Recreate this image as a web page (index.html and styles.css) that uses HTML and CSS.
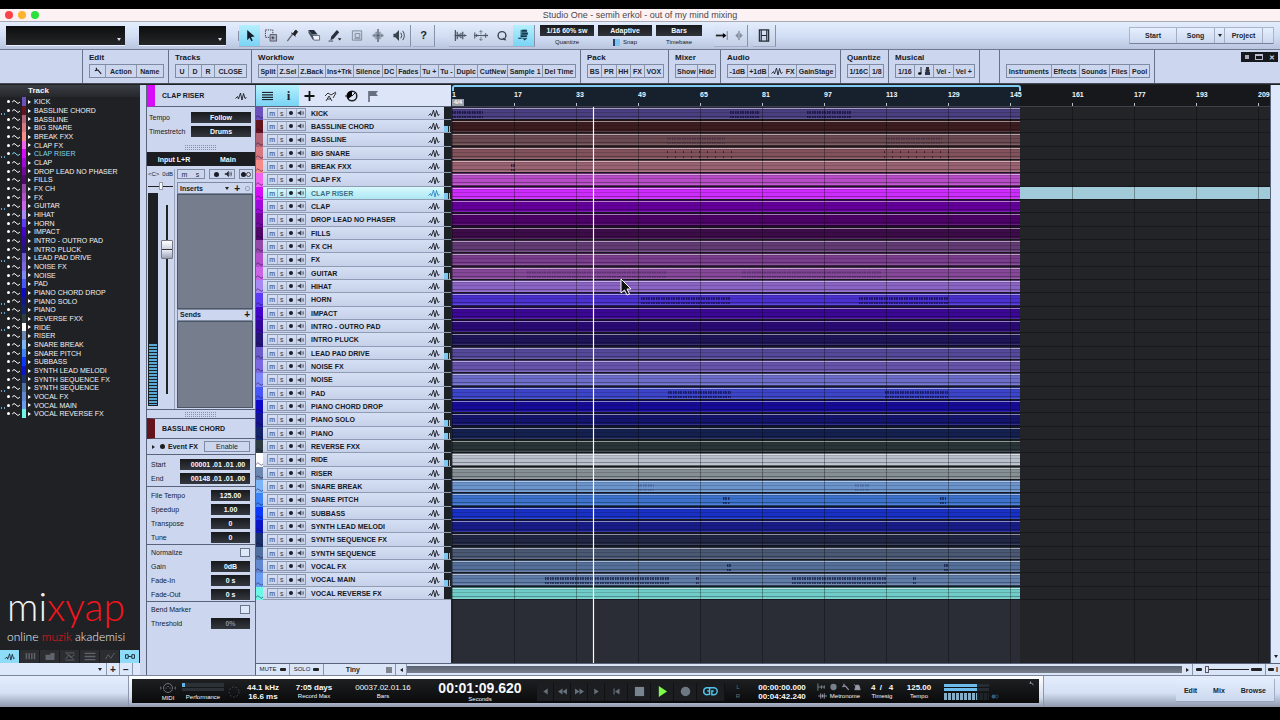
FILE: index.html
```
<!DOCTYPE html>
<html lang="en">
<head>
<meta charset="utf-8">
<title>Studio One - semih erkol - out of my mind mixing</title>
<link rel="stylesheet" href="styles.css">
</head>
<body>
<svg class="defs" aria-hidden="true">
  <symbol id="wave" viewBox="0 0 12 10"><path d="M.5 7.500L2.500 5.500 3.500 8 5.500 2 7 9 8.500 2.500 10 7.500 11.500 6.500" fill="none" stroke="currentColor" stroke-width=".9"/></symbol>
  <symbol id="speaker" viewBox="0 0 10 8"><path d="M1 3h2l3-3v8L3 5H1z" fill="currentColor"/><path d="M7 2q1.500 2 0 4M8.500 1q2 3 0 6" fill="none" stroke="currentColor" stroke-width=".8"/></symbol>
  <symbol id="sine" viewBox="0 0 8 6"><path d="M0 3.500Q2 0 4 3t4 0" fill="none" stroke="currentColor" stroke-width="1"/></symbol>
  <symbol id="wrench" viewBox="0 0 10 10"><path d="M3 1v3h2L9 8.500M4 4L1 4.500" fill="none" stroke="currentColor" stroke-width="1.500"/></symbol>
  <symbol id="bars3" viewBox="0 0 12 10"><path d="M0 1h12M0 3.700h12M0 6.400h12M0 9h12" stroke="currentColor" stroke-width="1.300"/></symbol>
</svg>
<div class="app">
  <header class="titlebar">
    <span class="lights"><i class="red"></i><i class="amber"></i><i class="green"></i></span>
    <h1>Studio One - semih erkol - out of my mind mixing</h1>
  </header>

  <div class="toolbar">
    <button class="display wide" aria-label="Parameter"><i class="down"></i></button>
    <button class="display" aria-label="Value"><i class="down"></i></button>
    <div class="tools edit-tools">
      <button class="on" aria-label="Arrow"><svg viewBox="0 0 14 14"><path d="M4 1l8 7-4 .500 2 4-1.500.800-2-4L4 12z" fill="#111c28"/></svg></button>
      <button aria-label="Range"><svg viewBox="0 0 14 14"><path d="M1 1h8v8H1z" fill="none" stroke="#334" stroke-dasharray="1.500 1"/><path d="M6 6h7v7H6z" fill="#aab3c6" stroke="#556"/><path d="M9 8v3M7.500 9.500h3" stroke="#334"/></svg></button>
      <button aria-label="Split"><svg viewBox="0 0 14 14"><path d="M2 13l6-8" stroke="#667" stroke-width="1.500"/><path d="M6 4l5 4M8 5l3-4 2 2-3 4z" stroke="#222" fill="#222"/></svg></button>
      <button aria-label="Eraser"><svg viewBox="0 0 14 14"><path d="M1 1h6l4 5H5z" fill="#222c36"/><path d="M5 7h8v5H7z" fill="#eef2fa" stroke="#667"/><path d="M1 1v3l5 8V7z" fill="#4a525e"/></svg></button>
      <button aria-label="Paint"><svg viewBox="0 0 14 14"><path d="M2 12l1-4 6-7 2.500 2.500-6 7z" fill="#273039"/><path d="M0 13h5" stroke="#445"/><path d="M10 10h4l-2 2.500z" fill="#222"/></svg></button>
      <button aria-label="Mute"><svg viewBox="0 0 14 14"><path d="M2 2h10v10H2z" fill="#cfd8ea" stroke="#7c8799"/><path d="M5 5h5v4H5zM4 10.500h7" fill="none" stroke="#7c8799"/></svg></button>
      <button aria-label="Bend"><svg viewBox="0 0 14 14"><path d="M1 7h12M3 5v4M5 3v8M9 3v8M11 5v4" stroke="#7c8799" stroke-width="1.500"/><path d="M7 0v14" stroke="#222"/></svg></button>
      <button aria-label="Listen"><svg viewBox="0 0 14 14"><path d="M1 5h2l4-4v12L3 9H1z" fill="#39434f"/><path d="M9 4q2 3 0 6M11 2q3.500 5 0 10" fill="none" stroke="#39434f"/></svg></button>
    </div>
    <div class="tools help"><button>?</button></div>
    <div class="tools nav-tools">
      <button aria-label="Snap events"><svg viewBox="0 0 14 14"><path d="M2 1v12M4 3v8M6 5v4M8 4v6M10 3v8M12 6v2M1 7h13" stroke="#48525f" stroke-width="1.300"/></svg></button>
      <button aria-label="Stretch"><svg viewBox="0 0 18 14"><path d="M1 3v8M3 5v4M5 6v2M13 6v2M15 4v6M17 6v2M0 7h18" stroke="#48525f" stroke-width="1.200"/><path d="M9 0v14M7 2h4M7 12h4" stroke="#48525f" stroke-dasharray="2 1"/></svg></button>
      <button aria-label="Quantize panel"><svg viewBox="0 0 14 14"><circle cx="7" cy="7" r="4.200" fill="none" stroke="#39434f" stroke-width="1.500"/><path d="M8 10l3 2" stroke="#39434f" stroke-width="1.500"/></svg></button>
      <button class="on" aria-label="Autoscroll"><svg viewBox="0 0 14 14"><path d="M6 1h5v2H6zM6 4h6v2H6zM5 7h6v1.500H5zM2 10h5l1.500 2 3-2" fill="#123a52" stroke="#123a52" stroke-width=".6"/><path d="M5 1v8M2 10h3" stroke="#123a52"/></svg></button>
    </div>
    <div class="fields">
      <div><button class="val">1/16 60% sw</button><small>Quantize</small></div>
      <div><button class="val">Adaptive</button><small><b class="snap"></b>Snap</small></div>
      <div><button class="val narrow">Bars</button><small>Timebase</small></div>
    </div>
    <div class="tools pair">
      <button aria-label="Follow"><svg viewBox="0 0 16 14"><path d="M1 7h10" stroke="#222" stroke-width="2"/><path d="M9 4l4 3-4 3z"/><path d="M14 2v10" stroke="#778"/></svg></button>
      <button aria-label="Center"><svg viewBox="0 0 10 14"><path d="M5 2v10" stroke="#667"/><path d="M4 4v6L1 7zM6 4v6l3-3z" fill="#8390a4"/></svg></button>
    </div>
    <div class="tools video"><button aria-label="Video"><svg viewBox="0 0 14 14"><path d="M2 1h10v12H2zM4 7h6M4 1v12M10 1v12" fill="none" stroke="#222c36" stroke-width="1.300"/></svg></button></div>
    <nav class="pages"><button>Start</button><button>Song</button><button aria-label="Songs"><i class="down dark"></i></button><button>Project</button><button aria-label="More"></button></nav>
  </div>

  <div class="macros">
    <section class="g0"></section>
    <section class="g-edit"><h2>Edit</h2><div><button aria-label="Setup"><svg class="i8"><use href="#wrench"/></svg></button><button>Action</button><button>Name</button></div></section>
    <section class="g-tracks"><h2>Tracks</h2><div><button>U</button><button>D</button><button>R</button><button>CLOSE</button></div></section>
    <section class="g-flow"><h2>Workflow</h2><div><button>Split</button><button>Z.Sel</button><button>Z.Back</button><button>Ins+Trk</button><button>Silence</button><button>DC</button><button>Fades</button><button>Tu +</button><button>Tu -</button><button>Duplc</button><button>CutNew</button><button>Sample 1</button><button>Del Time</button></div></section>
    <section class="g-pack"><h2>Pack</h2><div><button>BS</button><button>PR</button><button>HH</button><button>FX</button><button>VOX</button></div></section>
    <section class="g-mixer"><h2>Mixer</h2><div><button>Show</button><button>Hide</button></div></section>
    <section class="g-audio"><h2>Audio</h2><div><button>-1dB</button><button>+1dB</button><button class="plain" aria-label="Audio event"><svg class="i10"><use href="#wave"/></svg></button><button>FX</button><button>GainStage</button></div></section>
    <section class="g-quant"><h2>Quantize</h2><div><button>1/16C</button><button>1/8</button></div></section>
    <section class="g-music"><h2>Musical</h2><div><button>1/16</button><button aria-label="Note"><svg class="note" viewBox="0 0 14 10"><path d="M4 1v6" stroke="#222"/><ellipse cx="2.800" cy="7.500" rx="1.800" ry="1.300"/><path d="M8 9h5V6h-1l1-1-1-2V1H9v2L8 5l1 1H8z" fill="#334"/></svg></button><button>Vel -</button><button>Vel +</button></div></section>
    <section class="g-gap"></section>
    <section class="g-browse"><div><button>Instruments</button><button>Effects</button><button>Sounds</button><button>Files</button><button>Pool</button></div></section>
    <section class="g-rest"><span class="winbtns"><button aria-label="Pin"><i class="pin"></i></button><button aria-label="Maximize"><i class="max"></i></button><button>✕</button></span></section>
  </div>

  <main class="main">
    <aside class="side">
      <h3>Track</h3>
      <ul id="side-list" class="side-list"></ul>
      <div class="logo"><div class="mark">mi<em>xyap</em></div><p>online <em>muzik</em> akademisi</p></div>
      <div class="tabs">
        <button class="on" aria-label="Audio"><svg class="i10"><use href="#wave"/></svg></button>
        <button aria-label="Keys"><svg viewBox="0 0 12 10"><path d="M2 1v7M5 1v7M8 1v7M11 1v7" stroke="currentColor" stroke-width="1.600"/></svg></button>
        <button aria-label="Folder"><svg viewBox="0 0 12 10"><path d="M1 3h5l1-2h4v8H1z" fill="currentColor"/></svg></button>
        <button aria-label="Bus"><svg viewBox="0 0 12 10"><path d="M1 1h10M1 9h10M1 8l4-5 2 3 4-3M2 2l8 6" fill="none" stroke="currentColor"/></svg></button>
        <button aria-label="List"><svg viewBox="0 0 12 10"><path d="M0 1.500h12M0 5h12M0 8.500h12" stroke="currentColor" stroke-width="1.600"/></svg></button>
        <button aria-label="Automation"><svg viewBox="0 0 12 10"><path d="M1 8l3-5 3 4 4-6" fill="none" stroke="currentColor"/></svg></button>
        <button class="on" aria-label="Link"><svg viewBox="0 0 12 10"><path d="M1 3h3v4H1zM8 3h3v4H8zM4 5h4" fill="none" stroke="currentColor"/></svg></button>
      </div>
      <div class="side-foot"><button aria-label="Filter"><i class="down dark"></i></button><button>+</button><button>−</button><span></span></div>
    </aside>

    <aside class="inspector">
      <div class="ihead clap"><b>CLAP RISER</b><svg class="i10"><use href="#wave"/></svg></div>
      <div class="form tempo">
        <label for="tempo">Tempo</label><input id="tempo" class="w-l" value="Follow" readonly>
        <label for="ts">Timestretch</label><input id="ts" class="w-l" value="Drums" readonly>
      </div>
      <div class="grip"></div>
      <div class="io"><button>Input L+R</button><button>Main</button></div>
      <div class="channel">
        <div class="strip">
          <div class="pan-label"><span>&lt;C&gt;</span><span>0dB</span></div>
          <div class="pan"><i></i></div>
          <div class="fader"><div class="meter"><i></i></div><div class="track"><i></i></div></div>
        </div>
        <div class="racks">
          <div class="chbtns"><span><button>m</button><button>s</button></span><span><button aria-label="Record"><i class="dot"></i></button><button aria-label="Monitor"><svg class="i8"><use href="#speaker"/></svg></button></span><span><button aria-label="Stereo"><i class="dot"></i><i class="ring"></i></button></span></div>
          <div class="rhead"><b>Inserts</b><span><i class="down dark"></i><b class="plus">+</b><i class="pow"></i></span></div>
          <div class="rbody a"></div>
          <div class="rhead"><b>Sends</b><b class="plus">+</b></div>
          <div class="rbody b"></div>
        </div>
      </div>
      <div class="grip g2"></div>
      <div class="ihead chord"><b>BASSLINE CHORD</b></div>
      <div class="efx"><i class="right"></i><i class="dot"></i><b>Event FX</b><button>Enable</button></div>
      <div class="form pos">
        <label for="st">Start</label><input id="st" class="w-xl" value="00001 .01 .01 .00" readonly>
        <label for="en">End</label><input id="en" class="w-xl" value="00148 .01 .01 .00" readonly>
      </div>
      <div class="form">
        <label for="ft">File Tempo</label><input id="ft" value="125.00" readonly>
        <label for="sp">Speedup</label><input id="sp" value="1.00" readonly>
        <label for="tr">Transpose</label><input id="tr" value="0" readonly>
        <label for="tu">Tune</label><input id="tu" value="0" readonly>
      </div>
      <div class="form fades">
        <label for="no">Normalize</label><input id="no" type="checkbox">
        <label for="ga">Gain</label><input id="ga" value="0dB" readonly>
        <label for="fi">Fade-In</label><input id="fi" value="0 s" readonly>
        <label for="fo">Fade-Out</label><input id="fo" value="0 s" readonly>
      </div>
      <div class="form bend">
        <label for="be">Bend Marker</label><input id="be" type="checkbox">
        <label for="th">Threshold</label><input id="th" class="dim" value="0%" readonly>
      </div>
    </aside>

    <section class="arrange">
      <div class="heads">
        <div class="headbar">
          <button class="on" aria-label="Track list"><svg viewBox="0 0 12 10"><use href="#bars3"/></svg></button>
          <button class="on info">i</button>
          <button aria-label="Add track"><svg viewBox="0 0 10 10"><path d="M5 0v10M0 5h10" stroke="#111" stroke-width="1.800"/></svg></button>
          <button aria-label="Automation"><svg class="w14" viewBox="0 0 14 12"><path d="M1 6l3-3 3 2 5-3M2 11l3-5 3 5M3 9h4M9 8l3-5" fill="none" stroke="#333"/></svg></button>
          <button aria-label="Tempo track"><svg class="w14" viewBox="0 0 14 12"><circle cx="7" cy="6" r="4.800" fill="none" stroke="#222" stroke-width="1.500"/><path d="M7 1a5 5 0 0 0-4 8l4-3z"/><path d="M7 6l3-3M0 6h2" stroke="#222"/></svg></button>
          <button aria-label="Marker track"><svg class="w14" viewBox="0 0 14 12"><path d="M3 1v11" stroke="#556" stroke-width="1.400"/><path d="M3 1h9l-2 2.500L12 6H3z" fill="#667080"/></svg></button>
        </div>
        <div id="heads" class="rows"></div>
      </div>
      <div class="timeline">
        <div id="ruler" class="ruler"><span class="loop"></span><span class="sig">4/4</span></div>
        <div class="lanes">
          <div id="lanes" class="rows"></div>
          <div class="gridlines"></div>
          <div class="playhead"></div>
          <svg class="cursor" viewBox="0 0 12 18"><path d="M1 1v14l3.500-3 2.500 5 2.500-1-2.500-5H11z" fill="#111" stroke="#fff"/></svg>
        </div>
      </div>
      <div class="vscroll"><i class="down dark"></i></div>
      <div class="bottombar">
        <button class="ms">MUTE <i></i></button><button class="ms">SOLO <i></i></button>
        <button class="tiny"><b>Tiny</b><svg viewBox="0 0 6 6"><path d="M0 1h6M0 3h6M0 5h6" stroke="#222"/></svg></button>
        <button class="arr" aria-label="Scroll left"><i class="left"></i></button>
        <div class="hbar"></div>
        <button class="arr" aria-label="Scroll right"><i class="right"></i></button>
        <div class="zoom"><i class="pill"></i><input type="range" min="0" max="100" value="0" aria-label="Zoom"><i class="pill big"></i></div>
        <div class="corner"><i class="pill"></i><b>I</b></div>
      </div>
    </section>
  </main>

  <footer class="foot">
    <div class="deck"><div class="transport">
      <div class="c-midi"><svg class="midi" viewBox="0 0 18 12"><circle cx="9" cy="6" r="4.500" fill="none" stroke="#68707a"/><path d="M7 6h.100M9 4.500h.100M11 6h.100" stroke="#889" stroke-width="1.200" stroke-linecap="round"/><path d="M1 4l2 2-2 2zM17 4l-2 2 2 2z" fill="#556"/></svg><small>MIDI</small></div>
      <div class="c-perf"><span class="perf"><i></i></span><span class="perf two"></span><small>Performance</small></div>
      <div class="c-ring"><svg viewBox="0 0 14 14"><circle cx="7" cy="7" r="5" fill="none" stroke="#4c525a" stroke-dasharray="1.500 2"/></svg></div>
      <div class="c-rate"><b>44.1 kHz</b><b>16.6 ms</b></div>
      <div class="c-rec"><b>7:05 days</b><small>Record Max</small></div>
      <div class="c-bars"><span>00037.02.01.16</span><small>Bars</small></div>
      <div class="c-sec"><strong>00:01:09.620</strong><small>Seconds</small></div>
      <div class="c-btn">
        <button aria-label="Previous"><svg viewBox="0 0 12 12"><path d="M9 2v8L3 6z"/></svg></button>
        <button aria-label="Rewind"><svg viewBox="0 0 12 12"><path d="M6 2v8L0 6zM12 2v8L6 6z"/></svg></button>
        <button aria-label="Forward"><svg viewBox="0 0 12 12"><path d="M0 2v8l6-4zM6 2v8l6-4z"/></svg></button>
        <button aria-label="Next"><svg viewBox="0 0 12 12"><path d="M3 2v8l6-4z"/></svg></button>
        <button class="rtz" aria-label="Return to zero"><svg viewBox="0 0 12 12"><path d="M10 2v8L4 6zM2 2h1.500v8H2z"/></svg></button>
        <button class="big" aria-label="Stop"><svg viewBox="0 0 12 12"><path d="M1 1h10v10H1z" fill="#76858f"/></svg></button>
        <button class="big" aria-label="Play"><svg viewBox="0 0 12 12"><path d="M2 0v12l9-6z" fill="#7dfb4a"/></svg></button>
        <button class="big" aria-label="Record"><svg viewBox="0 0 12 12"><circle cx="6" cy="6" r="5.200" fill="#6c7982"/></svg></button>
        <button class="big loopb" aria-label="Loop"><svg viewBox="0 0 18 12"><path d="M7.500 5.500H5.500M8 2H5.500a3.800 3.800 0 0 0-1 7.500L8 9V2h4.500a3.800 3.800 0 0 1 0 7.600H10.500V5.500h2" fill="none" stroke="#4fc3e8" stroke-width="1.600"/></svg></button>
      </div>
      <div class="c-lr"><span>L</span><span>R</span></div>
      <div class="c-loop"><b>00:00:00.000</b><b>00:04:42.240</b></div>
      <div class="c-met">
        <span><svg viewBox="0 0 10 8"><path d="M1 0v8M1 4h8M5 2v4M8 2v4" stroke="#788" /></svg><svg viewBox="0 0 10 8"><circle cx="5" cy="4" r="3.500" fill="#777f88"/></svg><svg viewBox="0 0 10 10" color="#99a"><use href="#wrench"/></svg><svg viewBox="0 0 10 8"><path d="M2 7l1.500-5h3L8 7zM1 1l6 5" fill="#99a" stroke="#99a"/></svg></span>
        <span><svg viewBox="0 0 10 8"><path d="M0 4h10M3 1v6M5 2v4M7 1v6" stroke="#99a"/></svg><small>Metronome</small></span>
      </div>
      <div class="c-sig"><b>4&nbsp; /&nbsp; &nbsp;4</b><small>Timesig</small></div>
      <div class="c-tmp"><b>125.00</b><small>Tempo</small></div>
      <div class="c-out"><i></i><span><i class="seg"></i><svg viewBox="0 0 8 5"><circle cx="2.500" cy="2.500" r="2" fill="#2f5f80"/><circle cx="5.500" cy="2.500" r="1.600" fill="none" stroke="#2f5f80" stroke-width=".8"/></svg></span></div>
      <svg class="cw" viewBox="0 0 10 10"><use href="#wrench"/></svg>
    </div></div>
    <nav class="views"><button>Edit</button><button>Mix</button><button>Browse</button></nav>
  </footer>
</div>
<script src="app.js"></script>
</body>
</html>
```

FILE: styles.css
```
* { box-sizing: border-box; }
body { margin: 0; background: #000; color: #16191f; font: 7px/9px "Liberation Sans", Arial, sans-serif; }
button { font: bold 7px/9px "Liberation Sans", Arial, sans-serif; color: #20242c; background: none; border: 0; padding: 0; margin: 0; display: flex; align-items: center; justify-content: center; white-space: nowrap; }
input { font: bold 7px/9px "Liberation Sans", Arial, sans-serif; margin: 0; }
h1, h2, h3, p, ul { margin: 0; padding: 0; list-style: none; }
i, em { font-style: normal; }
svg { display: block; }
small { font-size: 6px; line-height: 8px; }
.defs { position: absolute; width: 0; height: 0; }
.i8 { width: 8px; height: 8px; }
.i10 { width: 12px; height: 10px; }
.app { min-height: 100vh; padding: 9px 0 13px; display: flex; flex-direction: column; overflow: hidden; }

.down, .left, .right { display: block; width: 0; height: 0; border: 3px solid transparent; flex: none; }
.down { border-top: 3px solid #dde; border-bottom: 0; border-left-width: 2px; border-right-width: 2px; }
.down.dark { border-top-color: #222; }
.left { border-right-color: #222; border-left: 0; border-top-width: 2px; border-bottom-width: 2px; }
.right { border-left-color: #222; border-right: 0; border-top-width: 2px; border-bottom-width: 2px; }
.dot { width: 5px; height: 5px; border-radius: 50%; background: #1a1d24; flex: none; }
.ring { width: 5px; height: 5px; border-radius: 50%; border: 1px solid #444; }

.titlebar { height: 13px; background: #fdf2f3; display: flex; align-items: center; justify-content: center; position: relative; border-bottom: 1px solid #a9a9b4; }
.titlebar h1 { font-size: 9px; font-weight: normal; color: #4c4649; line-height: 12px; }
.lights { position: absolute; left: 5px; display: flex; gap: 5px; }
.lights i { width: 8px; height: 8px; border-radius: 50%; }
.red { background: #fb4248; }
.amber { background: #fdb32b; }
.green { background: #2ae03b; }

.toolbar { height: 28px; display: flex; align-items: center; background: linear-gradient(#e3edfd, #d3dff5 50%, #b9c5de); border-bottom: 1px solid #6f7a90; padding: 0 6px; }
.display { width: 87px; height: 20px; background: linear-gradient(#0c0d0e, #242628); justify-content: flex-end; align-items: flex-end; padding: 4px; border-bottom: 1px solid #eef; }
.display.wide { width: 119px; margin-right: 14px; }
.tools { display: flex; height: 22px; border-right: 1px solid #8792a8; border-bottom: 1px solid #a3aec4; background: linear-gradient(#dfe9fa, #c3cfe6); }
.tools button { flex: 1; }
.tools svg { width: 14px; height: 13px; }
.tools .on, .headbar .on { background: linear-gradient(#b5f0fd, #7ad3f5); }
.edit-tools { width: 172px; margin-left: 13px; box-shadow: -7px 0 0 -6px #8792a8; }
.help { width: 22px; margin-left: 2px; }
.help button { font-size: 11px; }
.nav-tools { width: 86px; margin-left: 14px; }
.fields { display: flex; gap: 4px; margin-left: 5px; text-align: center; }
.fields small { display: flex; justify-content: center; align-items: center; gap: 3px; margin-top: 2px; }
.val { width: 54px; height: 11px; color: #f4f6fa; background: linear-gradient(#17191c, #30343a); }
.val.narrow { width: 46px; }
.snap { width: 7px; height: 7px; background: #7cc4f4; border-left: 2px solid #246; }
.pair { width: 34px; margin-left: 12px; }
.video { width: 23px; margin-left: 5px; }
.pages { margin-left: auto; display: flex; height: 17px; background: linear-gradient(#e6effe, #cbd7ee); border: 1px solid #aab5ca; border-bottom-color: #77829a; }
.pages button { width: 38px; border-right: 1px solid #a3aec4; }
.pages button:nth-child(1) { width: 47px; }
.pages button:nth-child(3), .pages button:nth-child(5) { width: 10px; }
.pages button:last-child { border: 0; }

.macros { height: 34px; display: flex; background: #ccd7ef; border-bottom: 1px solid #444c5c; }
.macros section { border-right: 1px solid #66718a; padding: 3px 4px 0 6px; flex: none; }
.macros h2 { font-size: 8px; line-height: 10px; height: 11px; }
.macros section > div { display: flex; height: 14px; border: 1px solid #7f8ba3; }
.macros div button { flex: 1 1 auto; border-right: 1px solid #8b96ad; }
.macros div button:last-child, .macros div .plain { border: 0; }
.macros .note { width: 14px; height: 10px; }
.macros .g0 { width: 83px; }
.macros .g-edit { width: 86px; }
.macros .g-tracks { width: 83px; }
.macros .g-flow { width: 329px; }
.macros .g-pack { width: 88px; }
.macros .g-mixer { width: 52px; }
.macros .g-audio { width: 120px; }
.macros .g-quant { width: 48px; }
.macros .g-music { width: 91px; }
.macros .g-gap { width: 20px; }
.macros .g-browse { width: 155px; padding-top: 14px; }
.macros .g-rest { flex: 1; border: 0; display: flex; justify-content: flex-end; padding: 2px 2px 0; }
.winbtns { display: flex; width: 37px; height: 10px; background: #15181c; }
.winbtns button { flex: 1; color: #ccd; font-size: 7px; }
.pin { width: 4px; height: 4px; background: #aab; }
.max { width: 8px; height: 6px; border: 1px solid #bbc; border-top-width: 2px; }

.main { flex: 1; display: flex; background: #ccd7ef; border-top: 1px solid #222; }
.side { width: 140px; flex: none; background: #202124; color: #f2f2f4; display: flex; flex-direction: column; }
.side h3 { font-size: 8px; line-height: 12px; height: 12px; padding-left: 28px; background: linear-gradient(#3a3d43, #25272b); }
.side-list { display: grid; grid-template-rows: repeat(12, 9px 9px 8px) 9px; }
.side-list li { display: flex; align-items: center; white-space: nowrap; padding-left: 1px; }
.side-list .act { width: 6px; height: 2px; align-self: flex-end; }
.side-list .act.live { background: repeating-linear-gradient(90deg, #58a8d8 0 1px, transparent 1px 3px); }
.side-list .wdot { width: 3px; height: 3px; border-radius: 50%; background: #fff; margin-right: 2px; }
.side-list svg { width: 8px; height: 6px; margin-right: 2px; }
.side-list .sw { width: 4px; align-self: stretch; margin-right: 2px; background: var(--c); }
.side-list .right { border-left-color: #fff; margin-right: 3px; }
.side-list .sel { color: #7fd4ee; }
.logo { margin-top: auto; padding-left: 7px; font-family: Lato, sans-serif; font-weight: 300; }
.logo .mark { font-size: 39px; line-height: 34px; }
.logo p { font-size: 12px; line-height: 14px; white-space: nowrap; margin-top: 7px; }
.logo em { color: #f5141c; }
.tabs { display: flex; height: 13px; margin-top: 6px; }
.tabs button { flex: 1; background: #2b2d31; color: #5f646c; border-right: 1px solid #1a1b1d; }
.tabs svg { width: 12px; height: 9px; }
.tabs .on { background: #8fdcf8; color: #123; }
.side-foot { display: flex; height: 12px; background: #dde8fb; }
.side-foot button { width: 13px; border-right: 1px solid #8c97ad; font-size: 10px; }
.side-foot button:first-child { flex: 1; justify-content: flex-end; padding-right: 4px; }
.side-foot span { width: 7px; }

.inspector { width: 110px; flex: none; margin-left: 6px; border-left: 1px solid #59637a; border-right: 1px solid #59637a; background: #ccd7ef; }
.ihead { height: 22px; display: flex; align-items: center; justify-content: space-between; padding: 0 8px 0 7px; border-left: 8px solid #d70cf8; border-bottom: 1px solid #59637a; }
.ihead.chord { height: 21px; border-left-color: #64141c; border-top: 1px solid #59637a; }
.form { display: grid; grid-template-columns: 1fr auto; grid-auto-rows: 14px; align-items: center; padding: 1px 5px 0 4px; border-bottom: 1px solid #59637a; }
.form input { width: 39px; height: 11px; border: 0; padding: 0; text-align: center; color: #f6f8fb; background: linear-gradient(#17191c, #34383f); }
.form .w-l { width: 60px; }
.form .w-xl { width: 70px; padding-left: 6px; }
.form .dim { color: #8a9099; }
.form input[type=checkbox] { appearance: none; width: 10px; height: 9px; border: 1px solid #6a748a; background: #dfe8f8; justify-self: end; }
.form.tempo { padding: 3px 4px 7px 2px; border: 0; }
.form.pos { padding-top: 2px; padding-bottom: 1px; }
.form.fades, .form.bend { grid-template-rows: 13px; }
.form.bend { border: 0; }
.grip { height: 5px; width: 32px; margin: 0 auto 2px; background: linear-gradient(transparent 1px, #ccd7ef 1px 2px, transparent 2px 3px, #ccd7ef 3px 4px, transparent 4px), repeating-linear-gradient(90deg, #8590a8 0 1px, transparent 1px 2px); }
.io { display: flex; height: 14px; background: #1b1d20; }
.io button { flex: 1; color: #f4f5f8; }
.channel { display: flex; height: 244px; padding-top: 3px; border-bottom: 1px solid #59637a; }
.strip { width: 28px; padding: 0 1px; display: flex; flex-direction: column; border-right: 1px solid #9aa5bb; }
.pan-label { display: flex; justify-content: space-between; font-size: 6px; line-height: 10px; }
.pan { height: 14px; display: flex; align-items: center; justify-content: center; background: linear-gradient(#222, #222) center / 100% 1px no-repeat; }
.pan i { width: 4px; height: 8px; background: #f4f8ff; border: 1px solid #99a; }
.fader { flex: 1; display: flex; gap: 2px; padding-bottom: 3px; }
.meter { width: 10px; background: #1c1f24; display: flex; align-items: flex-end; padding: 1px; }
.meter i { width: 100%; height: 62px; background: repeating-linear-gradient(#1c1f24 0 1px, transparent 1px 3px), linear-gradient(90deg, #5aa9d4 45%, #1c1f24 45% 55%, #5aa9d4 55%); }
.track { flex: 1; margin-bottom: 12px; padding-top: 47px; background: linear-gradient(#222, #222) center 12px / 2px 100% no-repeat; }
.track i { display: block; width: 12px; height: 19px; margin: 0 auto; background: linear-gradient(#fff, #cfd6e2 45%, #333 45% 52%, #eef 52%, #9aa4b6); border: 1px solid #778; border-radius: 1px; }
.racks { flex: 1; padding: 0 2px 1px; display: flex; flex-direction: column; }
.chbtns { display: flex; justify-content: space-between; margin-bottom: 3px; }
.chbtns span { display: flex; border: 1px solid #7f8ba3; height: 10px; }
.chbtns button { width: 13px; font-weight: normal; }
.chbtns span + span button { width: 12px; }
.rhead { height: 12px; border: 1px solid #7f8ba3; display: flex; align-items: center; justify-content: space-between; padding: 0 2px; }
.rhead span { display: flex; align-items: center; gap: 5px; }
.plus { font-size: 10px; }
.pow { width: 5px; height: 5px; border: 1px solid #99a4ba; border-radius: 2px; }
.rbody { background: #767e8d; border: 1px solid #4c5566; }
.rbody.a { flex: 115; }
.rbody.b { flex: 87; }
.grip.g2 { margin: 2px auto 1px; }
.efx { height: 16px; display: flex; align-items: center; padding: 0 5px; border-bottom: 1px solid #59637a; gap: 3px; }
.efx .right { margin-right: 2px; }
.efx button { margin-left: auto; width: 46px; height: 11px; border: 1px solid #7f8ba3; font-weight: normal; }

.arrange { flex: 1; min-width: 0; display: grid; grid-template-columns: 196px 1fr 10px; grid-template-rows: 1fr 12px; }
.heads { background: #ccd7ef; border-right: 1px solid #22262e; }
.headbar { height: 22px; display: flex; background: #dde6f8; border-bottom: 1px solid #59637a; }
.headbar button { width: 21px; }
.headbar .on:first-child { width: 22px; }
.headbar svg { width: 11px; height: 10px; }
.headbar .w14 { width: 14px; height: 12px; }
.headbar .info { font: bold 13px/14px "Liberation Serif", serif; }
.rows { display: grid; grid-template-rows: repeat(12, 13px 13px 14px) 13px; }
.hrow { display: flex; align-items: stretch; font-weight: bold; background: linear-gradient(#d5dff4, #c6d1e9); border-bottom: 1px solid #909cb4; }
.hrow .sw { width: 7px; background: var(--c); display: flex; align-items: flex-end; margin-bottom: -1px; }
.hrow .sw svg { width: 7px; height: 6px; color: rgba(20, 10, 60, .6); }
.hrow .btns { display: flex; margin: 1px 5px 1px 4px; border: 1px solid #8a96ae; width: 39px; }
.hrow .btns button { flex: 1; font-weight: normal; border-right: 1px solid #a4afc5; color: #333a48; min-width: 0; }
.hrow .btns button:last-child { border: 0; }
.hrow .btns .dot { width: 4px; height: 4px; }
.hrow .btns svg { width: 7px; height: 6px; }
.hrow .name { flex: 1; align-self: center; white-space: nowrap; }
.hrow .wv { width: 12px; height: 10px; align-self: center; margin-right: 4px; }
.hrow .mt { width: 7px; background: #1c2126; display: flex; align-items: flex-end; }
.hrow .mt.live::before { content: ""; width: 6px; height: 6px; background: linear-gradient(90deg, #7cc8f0 60%, #1c2126 60% 75%, #7cc8f0 75%); }
.hrow.sel { background: linear-gradient(#d6fafd, #aee6f2); color: #3d6f84; }
.hrow.sel .wv { color: #2c86c4; }

.timeline { display: flex; flex-direction: column; overflow: hidden; background: #222428; min-width: 0; }
.ruler { height: 22px; display: flex; position: relative; overflow: hidden; border-bottom: 1px solid #3c4048; background: linear-gradient(90deg, #17212d 568px, #17181b 568px); }
.ruler .tick { width: 62px; flex: none; color: #f2f5fa; font-weight: bold; line-height: 9px; padding-top: 5px; background: linear-gradient(#b8c0cc, #b8c0cc) 0 100% / 1px 3px no-repeat; }
.ruler .tick:first-of-type { padding-left: 2px; }
.ruler .tick:last-child { width: 12px; }
.ruler .loop { position: absolute; left: 0; top: 0; width: 569px; height: 6px; border: 2px solid #7fcdf2; border-bottom: 0; border-radius: 3px 3px 0 0; }
.ruler .sig { position: absolute; left: 0; bottom: 0; background: #9a9ea8; color: #fff; font-size: 6px; line-height: 7px; font-weight: bold; width: 12px; text-align: center; }
.lanes { flex: 1; position: relative; background: linear-gradient(90deg, #2a2d35 568px, #222428 568px); }
.lane { position: relative; border-bottom: 1px solid #17191e; }
.clip { width: 568px; height: 100%; background: linear-gradient(rgba(0,0,0,.45) 0 1px, rgba(255,255,255,.5) 1px 2px, rgba(0,0,0,.14) 2px 3px, transparent 3px 5px, rgba(0,0,0,.16) 5px 6px, transparent 6px 9px, rgba(0,0,0,.3) 9px 10px, transparent 10px 11px, rgba(255,255,255,.13) 11px 12px, rgba(0,0,0,.5) 12px), var(--b); }
.lane.sel { background: #a2cbd9; }
.mark-w { position: absolute; top: 4px; height: 7px; background: linear-gradient(transparent 3px, var(--b) 3px 5px, transparent 5px), repeating-linear-gradient(90deg, rgba(0, 0, 50, .6) 0 1px, rgba(0, 0, 40, .25) 1px 2px, rgba(0, 0, 40, .5) 2px 4px, transparent 4px 5px); }
.mark-w.dots { background: linear-gradient(transparent 2px, var(--b) 2px 5px, transparent 5px), repeating-linear-gradient(90deg, rgba(60, 0, 20, .7) 0 1px, transparent 1px 8px); }
.mark-w.faint { opacity: .3; }
.gridlines { position: absolute; inset: 0; background: linear-gradient(90deg, rgba(0, 0, 0, .32) 1px, transparent 1px) 0 0 / 62px 100%; }
.playhead { position: absolute; left: 141px; top: 0; bottom: 0; width: 1px; background: #fffbe8; box-shadow: 0 0 1px #f7f3e4; }
.cursor { position: absolute; left: 168px; top: 171px; width: 12px; height: 18px; }
.vscroll { background: #dde8fb; border-left: 1px solid #59637a; display: flex; align-items: flex-end; justify-content: center; padding-bottom: 5px; }
.bottombar { grid-column: 1 / -1; display: flex; background: #dbe5f8; border-top: 1px solid #59637a; }
.bottombar button { border-right: 1px solid #8c97ad; }
.ms { width: 34px; gap: 3px; }
.bottombar .ms { font-weight: normal; font-size: 6px; }
.ms i, .pill { width: 6px; height: 3px; background: #222; border-radius: 1px; flex: none; }
.tiny { width: 72px; justify-content: flex-end; gap: 26px; padding-right: 3px; }
.tiny svg { width: 6px; height: 6px; }
.arr { width: 11px; }
.hbar { flex: 1; margin: 2px 0; background: linear-gradient(#5a6270, #78808f); }
.zoom { width: 72px; display: flex; align-items: center; justify-content: space-between; padding: 0 3px; }
.zoom input { appearance: none; width: 44px; height: 1px; background: #222; margin: 0; }
.zoom input::-webkit-slider-thumb { appearance: none; width: 4px; height: 7px; background: #dfe6f2; border: 1px solid #556; }
.pill.big { width: 11px; }
.corner { width: 15px; display: flex; align-items: center; gap: 2px; border-left: 1px solid #8c97ad; padding-left: 2px; }

.foot { height: 32px; display: flex; justify-content: space-between; background: linear-gradient(#e3edfd, #d5e0f5 55%, #8f98ab); padding-left: 128px; border-top: 1px solid #7b869c; }
.deck { width: 916px; background: linear-gradient(#fff, #d3dcec 70%, #8f98ab); padding: 3px 4px 4px 3px; border-right: 1px solid #8c97ad; border-left: 1px solid #8c97ad; flex: none; }
.transport { height: 100%; background: linear-gradient(#1d1f21, #0a0a0b); color: #f6f8fb; display: flex; align-items: stretch; padding-left: 24px; position: relative; }
.transport > div { display: flex; flex-direction: column; align-items: center; justify-content: center; flex: none; white-space: nowrap; padding-top: 1px; }
.transport b, .transport span { font-size: 8px; line-height: 9px; }
.transport strong { font-size: 14px; line-height: 14px; padding-top: 1px; }
.c-midi { width: 24px; }
.midi { width: 18px; height: 12px; }
.c-perf { width: 46px; }
.perf { width: 42px; height: 4px; background: #2c3138; margin-bottom: 1px; }
.perf i { display: block; width: 3px; height: 4px; background: #62b4e6; }
.perf.two { height: 3px; margin-bottom: 2px; }
.c-ring { width: 15px; }
.c-ring svg { width: 14px; height: 14px; }
.c-rate { width: 44px; }
.c-rec { width: 58px; }
.c-bars { width: 80px; }
.c-sec { width: 114px; }
.transport .c-btn { flex-direction: row; }
.c-btn button { width: 17px; height: 18px; background: #1b1d20; border-right: 1px solid #101112; }
.c-btn svg { width: 9px; height: 9px; fill: #66707a; }
.c-btn .rtz { width: 23px; }
.c-btn .big { width: 23px; }
.c-btn .big svg { width: 11px; height: 11px; }
.c-btn .loopb { width: 28px; }
.c-btn .loopb svg { width: 17px; height: 11px; }
.c-lr { width: 26px; color: #69727c; }
.transport .c-lr span { font-size: 6px; }
.c-loop { width: 62px; }
.c-met { width: 52px; gap: 1px; }
.c-met > span { display: flex; gap: 3px; align-items: center; }
.c-met svg { width: 9px; height: 8px; }
.c-sig { width: 34px; }
.c-tmp { width: 40px; }
.transport .c-out { width: 60px; gap: 2px; align-items: flex-start; padding-left: 5px; }
.c-out i { width: 45px; height: 7px; background: linear-gradient(transparent 3px, #101214 3px 4px, transparent 4px), linear-gradient(90deg, #6abcec 33px, #262c33 33px); }
.c-out span { display: flex; align-items: center; gap: 2px; }
.c-out svg { width: 8px; height: 5px; }
.c-out .seg { background: repeating-linear-gradient(90deg, transparent 0 3px, #121416 3px 4px), linear-gradient(90deg, #86aec6 33px, #1e2328 33px); }
.cw { position: absolute; right: 5px; top: 2px; width: 5px; height: 5px; color: #bbc; }
.views { display: flex; align-items: center; justify-content: space-around; width: 99px; margin: 3px 5px 5px; border-right: 1px solid #a3aec4; border-bottom: 1px solid #98a3b9; background: linear-gradient(#e3edfc, #ccd8ee); }
```

FILE: app.js
```
// name, swatch colour, clip colour, activity, waveform marks [start, width, kind]
const tracks = [
  ['KICK', '#6c50bc', '#4a3f80', 0, [[0, 31], [278, 29], [355, 44]]],
  ['BASSLINE CHORD', '#64141c', '#3d1c20', 1],
  ['BASSLINE', '#b06474', '#6c4a52', 0, [[215, 58, 'faint'], [434, 56, 'faint']]],
  ['BIG SNARE', '#d87880', '#82525c', 0, [[215, 65, 'dots'], [432, 65, 'dots']]],
  ['BREAK FXX', '#f88c88', '#986270', 0, [[59, 4]]],
  ['CLAP FX', '#f264f0', '#b64cc6'],
  ['CLAP RISER', '#d70cf8', '#cc2cfc', 1],
  ['CLAP', '#a008dc', '#66009c'],
  ['DROP LEAD NO PHASER', '#74089c', '#4c0068'],
  ['FILLS', '#500868', '#3c0c48'],
  ['FX CH', '#9448a8', '#623a74'],
  ['FX', '#b450cc', '#7a3c8c'],
  ['GUITAR', '#cc64e8', '#854898', 1, [[75, 140, 'faint'], [290, 140, 'faint']]],
  ['HIHAT', '#a888f4', '#8a64c4'],
  ['HORN', '#5c3cf4', '#4a30cc', 0, [[189, 90], [407, 89]]],
  ['IMPACT', '#4404cc', '#3a0894'],
  ['INTRO - OUTRO PAD', '#34089c', '#2a0a74'],
  ['INTRO PLUCK', '#241478', '#1e1458'],
  ['LEAD PAD DRIVE', '#6c5ccc', '#54489a', 1],
  ['NOISE FX', '#7c68e0', '#6654ac'],
  ['NOISE', '#8088f8', '#6c6cc8'],
  ['PAD', '#4858f8', '#3c44c8', 0, [[216, 63], [433, 63]]],
  ['PIANO CHORD DROP', '#1008c8', '#160c98'],
  ['PIANO SOLO', '#14148c', '#14146c', 1],
  ['PIANO', '#142468', '#14204f', 1],
  ['REVERSE FXX', '#2c3c40', '#283438'],
  ['RIDE', '#ffffff', '#b8c0cc', 1],
  ['RISER', '#6c88b0', '#858f94'],
  ['SNARE BREAK', '#7cb4f8', '#6c94cc', 0, [[186, 16, 'faint'], [403, 15, 'faint']]],
  ['SNARE PITCH', '#3c84f8', '#3c72cc', 0, [[271, 7], [488, 6]]],
  ['SUBBASS', '#0c38fc', '#1830c4'],
  ['SYNTH LEAD MELODI', '#0c14c8', '#181c88'],
  ['SYNTH SEQUENCE FX', '#1c3068', '#202644'],
  ['SYNTH SEQUENCE', '#5070a0', '#4a5874', 1],
  ['VOCAL FX', '#6488d0', '#54709a', 0, [[275, 4], [492, 4]]],
  ['VOCAL MAIN', '#6c9cf0', '#607ca8', 1, [[93, 125], [244, 3], [340, 94], [461, 3]]],
  ['VOCAL REVERSE FX', '#6cf8e4', '#70ccc8']
];

const side = [];
const heads = [];
const lanes = [];
for (const [name, color, body, live, marks = []] of tracks) {
  const sel = name === 'CLAP RISER' ? ' sel' : '';
  const act = live ? ' live' : '';
  side.push(`<li class="${sel}" style="--c:${color}"><i class="act${act}"></i><i class="wdot"></i><svg><use href="#sine"/></svg><i class="sw"></i><i class="right"></i>${name}</li>`);
  heads.push(`<div class="hrow${sel}" style="--c:${color}"><span class="sw"><svg><use href="#sine"/></svg></span>
    <span class="btns"><button>m</button><button>s</button><button aria-label="Record ${name}"><i class="dot"></i></button><button aria-label="Monitor ${name}"><svg><use href="#speaker"/></svg></button></span>
    <span class="name">${name}</span><svg class="wv"><use href="#wave"/></svg><span class="mt${act}"></span></div>`);
  const w = marks.map(([x, width, kind = '']) => `<i class="mark-w ${kind}" style="left:${x}px;width:${width}px"></i>`).join('');
  lanes.push(`<div class="lane${sel}" style="--b:${body}"><div class="clip"></div>${w}</div>`);
}
document.getElementById('side-list').innerHTML = side.join('');
document.getElementById('heads').innerHTML = heads.join('');
document.getElementById('lanes').innerHTML = lanes.join('');

let ticks = '';
for (let bar = 1; bar <= 209; bar += 16) ticks += `<span class="tick">${bar}</span>`;
document.getElementById('ruler').insertAdjacentHTML('beforeend', ticks);
```
